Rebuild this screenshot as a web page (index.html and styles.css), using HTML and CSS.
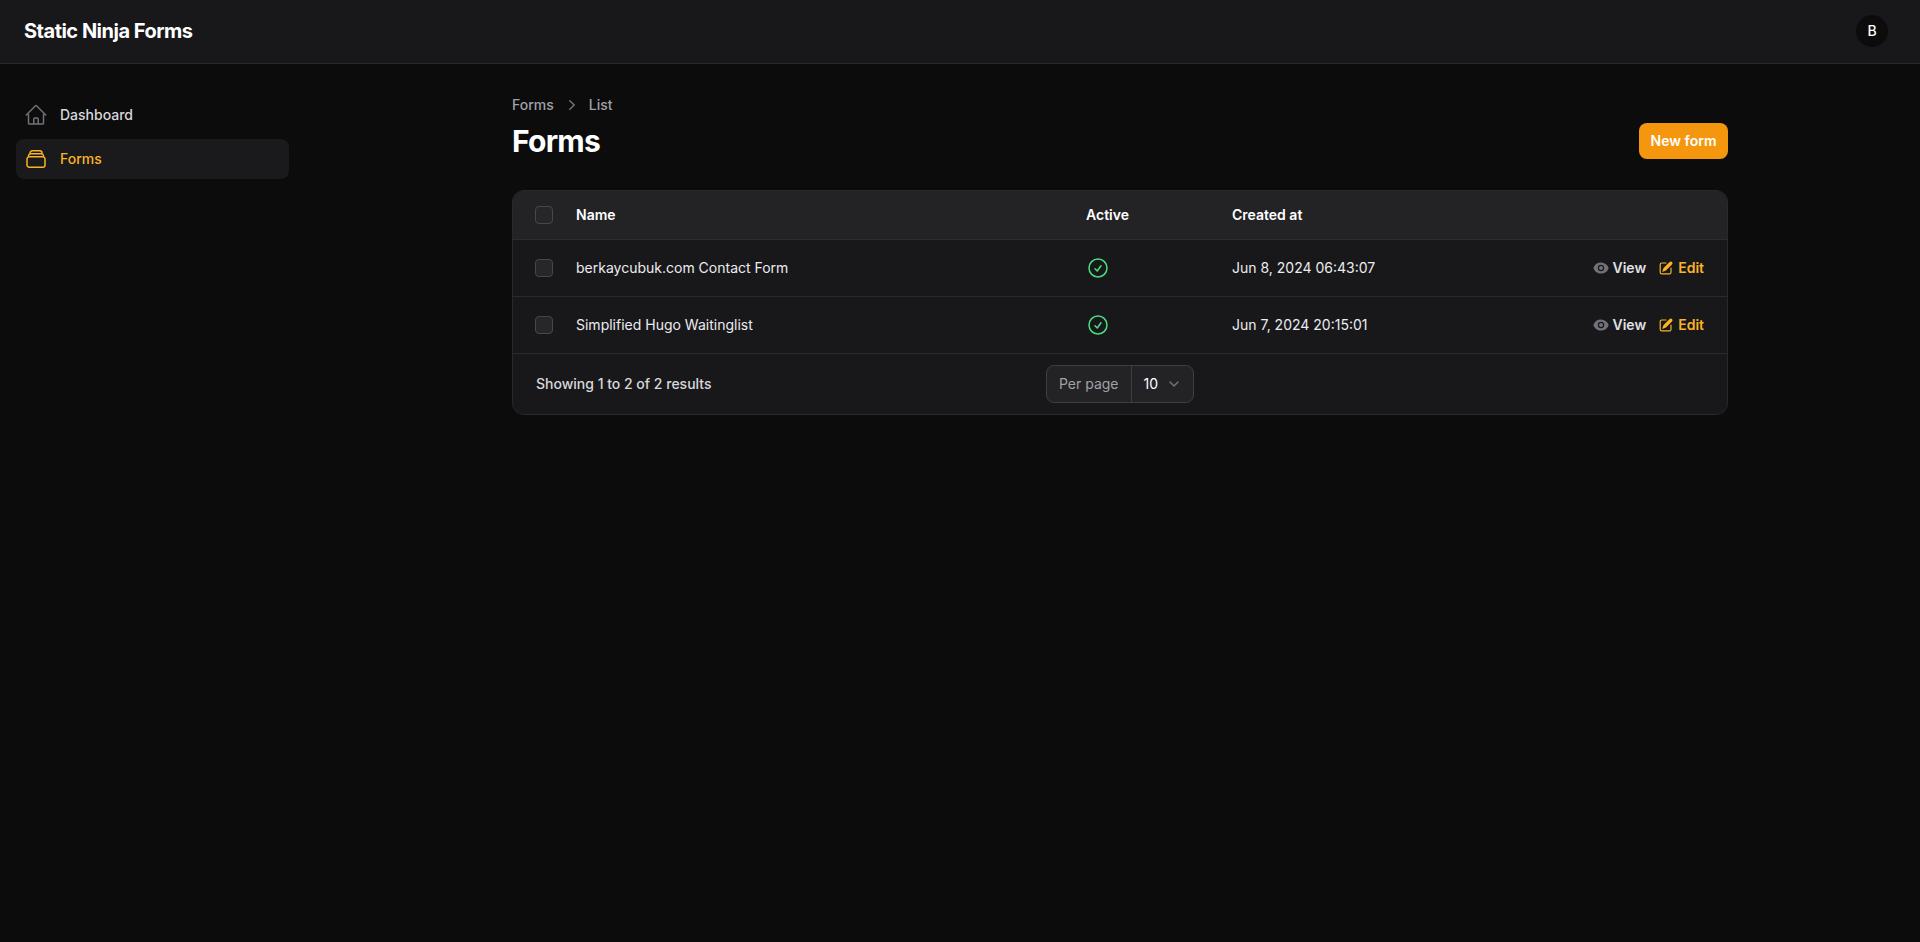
FILE: index.html
```html
<!doctype html>
<html lang="en">
<head>
  <meta charset="UTF-8">
  <title>Forms</title>
  <link rel="stylesheet" href="styles.css">
</head>
<body>
  <header class="topbar">
    <div class="brand">Static Ninja Forms</div>
    <div class="avatar">B</div>
  </header>
  <div class="shell">
    <nav class="sidebar">
      <a class="nav-item" href="#">
        <svg class="nav-icon" viewBox="0 0 24 24" fill="none" stroke="currentColor" stroke-width="1.5" stroke-linecap="round" stroke-linejoin="round"><path d="m2.25 12 8.954-8.955c.44-.439 1.152-.439 1.591 0L21.75 12M4.5 9.75v10.125c0 .621.504 1.125 1.125 1.125H9.75v-4.875c0-.621.504-1.125 1.125-1.125h2.25c.621 0 1.125.504 1.125 1.125V21h4.125c.621 0 1.125-.504 1.125-1.125V9.75M8.25 21h8.25"/></svg>
        <span>Dashboard</span>
      </a>
      <a class="nav-item active" href="#">
        <svg class="nav-icon" viewBox="0 0 24 24" fill="none" stroke="currentColor" stroke-width="1.5" stroke-linecap="round" stroke-linejoin="round"><path d="M6 6.878V6a2.25 2.25 0 0 1 2.25-2.25h7.5A2.25 2.25 0 0 1 18 6v.878m-12 0c.235-.083.487-.128.75-.128h10.5c.263 0 .515.045.75.128m-12 0A2.25 2.25 0 0 0 4.5 9v.878m13.5-3A2.25 2.25 0 0 1 19.5 9v.878m0 0a2.246 2.246 0 0 0-.75-.128H5.25c-.263 0-.515.045-.75.128m15 0A2.25 2.25 0 0 1 21 12v6a2.25 2.25 0 0 1-2.25 2.25H5.25A2.25 2.25 0 0 1 3 18v-6c0-.98.626-1.813 1.5-2.122"/></svg>
        <span>Forms</span>
      </a>
    </nav>
    <main class="main">
      <div class="page">
        <div class="page-head">
          <div>
            <div class="crumbs">
              <span>Forms</span>
              <svg class="crumb-sep" viewBox="0 0 20 20" fill="currentColor"><path fill-rule="evenodd" d="M7.21 14.77a.75.75 0 0 1 .02-1.06L11.168 10 7.23 6.29a.75.75 0 1 1 1.04-1.08l4.5 4.25a.75.75 0 0 1 0 1.08l-4.5 4.25a.75.75 0 0 1-1.06-.02Z" clip-rule="evenodd"/></svg>
              <span>List</span>
            </div>
            <h1 class="title">Forms</h1>
          </div>
          <a class="btn-new" href="#">New form</a>
        </div>

        <section class="card">
          <table class="forms-table">
            <thead>
              <tr>
                <th class="col-check"><span class="check"></span></th>
                <th class="col-name">Name</th>
                <th class="col-active">Active</th>
                <th class="col-created">Created at</th>
                <th class="col-actions"></th>
              </tr>
            </thead>
            <tbody>
              <tr>
                <td class="col-check"><span class="check"></span></td>
                <td>berkaycubuk.com Contact Form</td>
                <td><svg class="ok" viewBox="0 0 24 24" fill="none" stroke="currentColor" stroke-width="1.5" stroke-linecap="round" stroke-linejoin="round"><path d="M9 12.75 11.25 15 15 9.75M21 12a9 9 0 1 1-18 0 9 9 0 0 1 18 0Z"/></svg></td>
                <td>Jun 8, 2024 06:43:07</td>
                <td class="col-actions">
                  <div class="actions">
                    <a class="act" href="#"><svg class="act-icon view-icon" viewBox="0 0 20 20" fill="currentColor"><path d="M10 12.5a2.5 2.5 0 1 0 0-5 2.5 2.5 0 0 0 0 5Z"/><path fill-rule="evenodd" d="M.664 10.59a1.651 1.651 0 0 1 0-1.186A10.004 10.004 0 0 1 10 3c4.257 0 7.893 2.66 9.336 6.41.147.381.146.804 0 1.186A10.004 10.004 0 0 1 10 17c-4.257 0-7.893-2.66-9.336-6.41ZM14 10a4 4 0 1 1-8 0 4 4 0 0 1 8 0Z" clip-rule="evenodd"/></svg>View</a>
                    <a class="act edit" href="#"><svg class="act-icon" viewBox="0 0 20 20" fill="currentColor"><path d="m5.433 13.917 1.262-3.155A4 4 0 0 1 7.58 9.42l6.92-6.918a2.121 2.121 0 0 1 3 3l-6.92 6.918c-.383.383-.84.685-1.343.886l-3.154 1.262a.5.5 0 0 1-.65-.65Z"/><path d="M3.5 5.75c0-.69.56-1.25 1.25-1.25H10A.75.75 0 0 0 10 3H4.75A2.75 2.75 0 0 0 2 5.75v9.5A2.75 2.75 0 0 0 4.75 18h9.5A2.75 2.75 0 0 0 17 15.25V10a.75.75 0 0 0-1.5 0v5.25c0 .69-.56 1.25-1.25 1.25h-9.5c-.69 0-1.25-.56-1.25-1.25v-9.5Z"/></svg>Edit</a>
                  </div>
                </td>
              </tr>
              <tr>
                <td class="col-check"><span class="check"></span></td>
                <td>Simplified Hugo Waitinglist</td>
                <td><svg class="ok" viewBox="0 0 24 24" fill="none" stroke="currentColor" stroke-width="1.5" stroke-linecap="round" stroke-linejoin="round"><path d="M9 12.75 11.25 15 15 9.75M21 12a9 9 0 1 1-18 0 9 9 0 0 1 18 0Z"/></svg></td>
                <td>Jun 7, 2024 20:15:01</td>
                <td class="col-actions">
                  <div class="actions">
                    <a class="act" href="#"><svg class="act-icon view-icon" viewBox="0 0 20 20" fill="currentColor"><path d="M10 12.5a2.5 2.5 0 1 0 0-5 2.5 2.5 0 0 0 0 5Z"/><path fill-rule="evenodd" d="M.664 10.59a1.651 1.651 0 0 1 0-1.186A10.004 10.004 0 0 1 10 3c4.257 0 7.893 2.66 9.336 6.41.147.381.146.804 0 1.186A10.004 10.004 0 0 1 10 17c-4.257 0-7.893-2.66-9.336-6.41ZM14 10a4 4 0 1 1-8 0 4 4 0 0 1 8 0Z" clip-rule="evenodd"/></svg>View</a>
                    <a class="act edit" href="#"><svg class="act-icon" viewBox="0 0 20 20" fill="currentColor"><path d="m5.433 13.917 1.262-3.155A4 4 0 0 1 7.58 9.42l6.92-6.918a2.121 2.121 0 0 1 3 3l-6.92 6.918c-.383.383-.84.685-1.343.886l-3.154 1.262a.5.5 0 0 1-.65-.65Z"/><path d="M3.5 5.75c0-.69.56-1.25 1.25-1.25H10A.75.75 0 0 0 10 3H4.75A2.75 2.75 0 0 0 2 5.75v9.5A2.75 2.75 0 0 0 4.75 18h9.5A2.75 2.75 0 0 0 17 15.25V10a.75.75 0 0 0-1.5 0v5.25c0 .69-.56 1.25-1.25 1.25h-9.5c-.69 0-1.25-.56-1.25-1.25v-9.5Z"/></svg>Edit</a>
                  </div>
                </td>
              </tr>
            </tbody>
          </table>
          <div class="card-foot">
            <div class="results">Showing 1 to 2 of 2 results</div>
            <div class="per-page">
              <span class="per-label">Per page</span>
              <span class="per-value">10
                <svg class="per-chev" viewBox="0 0 20 20" fill="none" stroke="currentColor" stroke-width="1.5" stroke-linecap="round" stroke-linejoin="round"><path d="m6 8 4 4 4-4"/></svg>
              </span>
            </div>
            <div></div>
          </div>
        </section>
      </div>
    </main>
  </div>
</body>
</html>
```

FILE: styles.css
```css
* {box-sizing: border-box;}
html,body {margin:0;height:100%;}
body {background:#0c0c0d;color:#fff;font-family:"Inter","Liberation Sans",sans-serif;font-size:14px;line-height:20px;}
a {color:inherit;text-decoration:none;}

.topbar {height:64px;display:flex;align-items:center;justify-content:space-between;padding:0 32px 1px 24px;background:#18181b;border-bottom:1px solid #2a2a2d;}
.brand {font-size:20px;line-height:20px;font-weight:700;letter-spacing:-0.5px;}
.avatar {width:32px;height:32px;border-radius:50%;background:#0c0c0d;display:flex;align-items:center;justify-content:center;font-size:14px;font-weight:500;}

.shell {display:flex;}
.sidebar {width:320px;flex:none;padding:31px 31px 0 16px;display:flex;flex-direction:column;gap:4px;}
.nav-item {height:40px;display:flex;align-items:center;gap:12px;padding:0 8px;border-radius:8px;color:#d8d8dc;font-weight:500;}
.nav-icon {width:24px;height:24px;color:#71717a;flex:none;}
.nav-item.active {background:#1a1a1c;color:#f8b425;}
.nav-item.active .nav-icon {color:#f8b425;}

.main {flex:1;min-width:0;}
.page {max-width:1280px;margin:0 auto;padding:31px 32px 32px;}
.page-head {display:flex;align-items:flex-end;justify-content:space-between;margin-bottom:31px;}
.crumbs {display:flex;align-items:center;gap:8px;color:#a1a1a6;font-weight:500;height:20px;margin-bottom:8px;}
.crumb-sep {width:20px;height:20px;color:#71717a;margin-right:-1px;}
.title {margin:0;font-size:30px;line-height:36px;font-weight:700;letter-spacing:-0.75px;}
.btn-new {height:36px;padding:0 11.5px;display:flex;align-items:center;background:#f5970e;border-radius:8px;font-weight:600;}

.card {background:#18181b;border:1px solid #29292c;border-radius:12px;overflow:hidden;}
.forms-table {width:100%;border-collapse:collapse;table-layout:fixed;}
.forms-table th {height:48px;background:#232326;text-align:left;font-weight:600;padding:0 0 0 12px;border-bottom:1px solid #2d2d30;}
.forms-table td {height:57px;padding:0 0 0 12px;color:#ececee;border-bottom:1px solid #2a2a2d;}
.forms-table .col-check {padding-left:22px;width:51px;}
.col-name {width:510px;}
.col-active {width:146px;}
.col-created {width:auto;}
.forms-table .col-actions {width:300px;padding:0 23px 0 0;}
.check {display:block;width:18px;height:18px;border:1px solid #47474b;border-radius:4px;background:#27272a;}
.ok {display:block;width:24px;height:24px;color:#4ade80;}
.actions {display:flex;justify-content:flex-end;gap:12px;}
.act {display:flex;align-items:center;gap:4px;font-weight:600;color:#e0e0e4;}
.act-icon {width:16px;height:16px;}
.view-icon {color:#71717a;}
.edit {color:#f8b425;}

.card-foot {height:60px;display:grid;grid-template-columns:1fr auto 1fr;align-items:center;padding:0 23px;}
.results {color:#d8d8dc;font-weight:500;}
.per-page {display:flex;height:38px;border:1px solid #3f3f42;border-radius:8px;background:#232326;align-items:stretch;}
.per-label {display:flex;align-items:center;padding:0 12px;color:#a1a1a6;border-right:1px solid #3f3f42;}
.per-value {display:flex;align-items:center;gap:6px;padding:0 9px 0 12px;color:#fff;}
.per-chev {width:20px;height:20px;color:#71717a;}
```
